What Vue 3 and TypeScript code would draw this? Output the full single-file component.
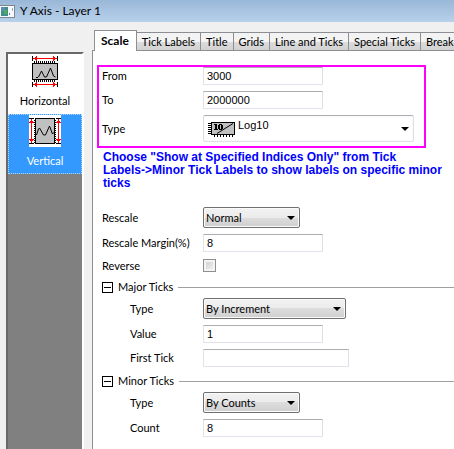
<script setup lang="ts">
import { ref } from 'vue'

interface AxisItem {
  id: string
  label: string
}

const axes: AxisItem[] = [
  { id: 'horizontal', label: 'Horizontal' },
  { id: 'vertical', label: 'Vertical' },
]
const tabs: string[] = ['Scale', 'Tick Labels', 'Title', 'Grids', 'Line and Ticks', 'Special Ticks', 'Break']

const activeAxis = ref('vertical')
const activeTab = ref('Scale')

const from = ref('3000')
const to = ref('2000000')
const scaleType = ref('Log10')
const rescale = ref('Normal')
const margin = ref('8')
const reverse = ref(false)
const majorOpen = ref(true)
const majorType = ref('By Increment')
const majorValue = ref('1')
const firstTick = ref('')
const minorOpen = ref(true)
const minorType = ref('By Counts')
const minorCount = ref('8')
</script>

<template>
  <div class="dialog">
    <header class="titlebar">
      <svg class="app-icon" width="16" height="13" viewBox="0 0 16 13" shape-rendering="crispEdges" aria-hidden="true">
        <rect x="0" y="0" width="15" height="13" fill="#7d8794" />
        <rect x="0" y="1" width="14" height="11" fill="#f6f9fb" />
        <rect x="1" y="2" width="7" height="9" fill="#3f8f86" />
        <rect x="1" y="2" width="4" height="4" fill="#5d8fb4" />
        <rect x="4" y="5" width="3" height="4" fill="#54a866" />
        <rect x="9" y="8" width="1" height="2" fill="#6a7f90" />
        <rect x="12" y="3" width="1" height="3" fill="#8db3c4" />
      </svg>
      <h1>Y Axis - Layer 1</h1>
    </header>

    <div class="body">
      <nav class="sidebar" aria-label="Axes">
        <button
          v-for="axis in axes"
          :key="axis.id"
          type="button"
          class="axis"
          :class="{ selected: activeAxis === axis.id }"
          @click="activeAxis = axis.id"
        >
          <svg v-if="axis.id === 'horizontal'" width="32" height="32" viewBox="0 0 32 32" shape-rendering="crispEdges" aria-hidden="true">
            <rect width="32" height="32" fill="#fff" />
            <path d="M3.500 1v5M28.500 1v5M3.500 27v5M28.500 27v5" stroke="#000" />
            <path d="M5 3.500h22M5 29.500h22" stroke="#f00" />
            <path d="M4 3.500l4-2.500v5zM28 3.500l-4-2.500v5zM4 29.500l4-2.500v5zM28 29.500l-4-2.500v5z" fill="#f00" />
            <path d="M5 7h22M5 26h22" stroke="#000" stroke-width="2" stroke-dasharray="1 1" />
            <rect x="3.500" y="8.500" width="25" height="16" fill="#c0c0c0" stroke="#000" />
            <path d="M7 22.500h2" stroke="#000" />
            <path d="M9.500 22l3-6 3 6h2l4-9 3 8 2 1" fill="none" stroke="#000" shape-rendering="auto" />
          </svg>
          <svg v-else width="32" height="32" viewBox="0 0 32 32" shape-rendering="crispEdges" aria-hidden="true">
            <rect width="32" height="32" fill="#fff" />
            <path d="M0 3.500h5M0 28.500h5M27 3.500h5M27 28.500h5" stroke="#000" />
            <path d="M2.500 5v22M29.500 5v22" stroke="#f00" />
            <path d="M2.500 4L0 8h5zM2.500 28L0 24h5zM29.500 4L27 8h5zM29.500 28L27 24h5z" fill="#f00" />
            <path d="M5.500 5v23M26.500 5v23" stroke="#000" stroke-width="1" stroke-dasharray="1 1" />
            <rect x="6.500" y="3.500" width="19" height="25" fill="#c0c0c0" stroke="#000" />
            <path d="M7.500 20l2-6 1-1 4 7h2l4-9 3 8 2-2" fill="none" stroke="#000" shape-rendering="auto" />
          </svg>
          <span>{{ axis.label }}</span>
        </button>
      </nav>

      <main class="notebook">
        <div class="tabs" role="tablist">
          <button
            v-for="tab in tabs"
            :key="tab"
            type="button"
            role="tab"
            class="tab"
            :class="{ active: activeTab === tab }"
            :aria-selected="activeTab === tab"
            @click="activeTab = tab"
          >{{ tab }}</button>
        </div>

        <form class="pane" @submit.prevent>
          <div class="range">
            <div class="row">
              <label for="from">From</label>
              <input id="from" v-model="from" type="text">
            </div>
            <div class="row">
              <label for="to">To</label>
              <input id="to" v-model="to" type="text">
            </div>
            <div class="row">
              <label for="scale-type">Type</label>
              <div class="picker flat">
                <svg class="scale-icon" width="27" height="18" viewBox="0 0 27 18" shape-rendering="crispEdges" aria-hidden="true">
                  <rect x="3.500" y="1.500" width="23" height="12" fill="#c0c0c0" stroke="#000" />
                  <path d="M1.500 2v12" stroke="#000" stroke-width="3" stroke-dasharray="1 1" />
                  <path d="M6 15h20" stroke="#000" stroke-width="2" stroke-dasharray="1 2" />
                  <path d="M6 3h3v5h1v1H6V8h1V4H6zM11 3h3v1h1v4h-1v1h-3V8h-1V4h1zM12 4v4h1V4z" fill="#000" fill-rule="evenodd" />
                  <path d="M9 12.500l16-10" fill="none" stroke="#000" shape-rendering="auto" />
                </svg>
                <select id="scale-type" v-model="scaleType">
                  <option>Log10</option>
                  <option>Linear</option>
                </select>
              </div>
            </div>
          </div>

          <p class="note">Choose "Show at Specified Indices Only" from Tick<br>Labels-&gt;Minor Tick Labels to show labels on specific minor ticks</p>

          <div class="fields">
            <div class="row">
              <label for="rescale">Rescale</label>
              <div class="picker">
                <select id="rescale" v-model="rescale">
                  <option>Normal</option>
                  <option>Auto</option>
                </select>
              </div>
            </div>
            <div class="row">
              <label for="margin">Rescale Margin(%)</label>
              <input id="margin" v-model="margin" type="text">
            </div>
            <div class="row check">
              <label for="reverse">Reverse</label>
              <input id="reverse" v-model="reverse" type="checkbox">
            </div>
          </div>

          <section>
            <h2>
              <button type="button" class="toggle" :aria-expanded="majorOpen" aria-label="Major Ticks" @click="majorOpen = !majorOpen"></button>
              Major Ticks
            </h2>
            <div v-show="majorOpen" class="fields nested">
              <div class="row">
                <label for="major-type">Type</label>
                <div class="picker wide">
                  <select id="major-type" v-model="majorType">
                    <option>By Increment</option>
                    <option>By Counts</option>
                  </select>
                </div>
              </div>
              <div class="row">
                <label for="major-value">Value</label>
                <input id="major-value" v-model="majorValue" type="text">
              </div>
              <div class="row">
                <label for="first-tick">First Tick</label>
                <input id="first-tick" v-model="firstTick" class="wide" type="text">
              </div>
            </div>
          </section>

          <section>
            <h2>
              <button type="button" class="toggle" :aria-expanded="minorOpen" aria-label="Minor Ticks" @click="minorOpen = !minorOpen"></button>
              Minor Ticks
            </h2>
            <div v-show="minorOpen" class="fields nested">
              <div class="row">
                <label for="minor-type">Type</label>
                <div class="picker">
                  <select id="minor-type" v-model="minorType">
                    <option>By Counts</option>
                    <option>By Increment</option>
                  </select>
                </div>
              </div>
              <div class="row">
                <label for="minor-count">Count</label>
                <input id="minor-count" v-model="minorCount" type="text">
              </div>
            </div>
          </section>
        </form>
      </main>
    </div>
  </div>
</template>

<style>
body {
  background: #f0f0f0;
}
</style>

<style scoped>
.dialog {
  display: flex;
  flex-direction: column;
  min-height: 100vh;
  overflow: hidden;
  background: #f0f0f0;
  color: #000;
  font: 11px/16px Lato, "Noto Sans", sans-serif;
}

.dialog *,
.dialog *::after {
  box-sizing: border-box;
}

.titlebar {
  display: flex;
  align-items: center;
  gap: 4px;
  height: 22px;
  background: linear-gradient(#99b7d8, #b9d1ea);
}

h1 {
  margin: 0;
  font-size: 12px;
  line-height: 16px;
  font-weight: 400;
}

.body {
  display: flex;
  flex: 1;
}

.sidebar {
  display: flex;
  flex: none;
  flex-direction: column;
  width: 78px;
  margin: 30px 8px 0 6px;
  border: 2px solid #fff;
  border-top-color: #696969;
  border-left-color: #696969;
  border-bottom: 0;
  background: #808080;
}

.axis {
  display: flex;
  flex-direction: column;
  align-items: center;
  gap: 6px;
  height: 60px;
  padding: 0;
  border: 1px solid #fff;
  background: #fff;
  color: #000;
  font: inherit;
}

.axis.selected {
  border: 1px dotted #b8d9ff;
  background: #39f;
  color: #fff;
}

.notebook {
  display: flex;
  flex: 1;
  flex-direction: column;
  min-width: 0;
  padding-top: 8px;
}

.tabs {
  display: flex;
  align-items: flex-end;
  height: 20px;
  padding-left: 2px;
}

.tab {
  flex: none;
  height: 18px;
  padding: 0 5px;
  border: 1px solid #8c8e94;
  border-left-width: 0;
  border-bottom: 0;
  background: linear-gradient(#f3f3f3 50%, #dcdcdc 50%, #d2d2d2);
  color: #000;
  font: inherit;
  line-height: 16px;
  white-space: nowrap;
}

.tab.active {
  height: 21px;
  margin-bottom: -1px;
  padding: 0 7px 0 6px;
  border-left-width: 1px;
  background: #fff;
  font-size: 12px;
  font-weight: 700;
  z-index: 1;
}

.pane {
  flex: 1;
  padding: 14px 0 11px 4px;
  border-top: 1px solid #8c8e94;
  border-left: 1px solid #8c8e94;
  background: #fff;
}

.range {
  display: flex;
  flex-direction: column;
  gap: 6px;
  width: 329px;
  padding: 0 3px 4px;
  border: 2px solid #f0f;
}

.row {
  display: flex;
  align-items: center;
}

.row label {
  flex: none;
  width: 101px;
}

.fields {
  display: flex;
  flex-direction: column;
  gap: 6px;
  padding-left: 5px;
}

.nested {
  padding-left: 33px;
}

.nested label {
  width: 73px;
}

input[type="text"] {
  width: 120px;
  height: 18px;
  padding: 0 3px;
  border: 1px solid #e2e3ea;
  border-top-color: #abadb3;
  border-right-color: #dbdfe6;
  border-radius: 1px;
  background: #fff;
  color: #000;
  font: 11px/16px "Liberation Sans", Arial, sans-serif;
}

input[type="text"].wide {
  width: 146px;
}

.picker {
  position: relative;
  width: 97px;
}

.picker.wide {
  width: 143px;
}

.picker.flat {
  width: 211px;
}

.picker::after {
  content: "";
  position: absolute;
  top: 9px;
  right: 5px;
  border: 4px solid transparent;
  border-top-color: #000;
  border-bottom: 0;
  pointer-events: none;
}

.picker.flat::after {
  top: 12px;
}

select {
  display: block;
  width: 100%;
  height: 21px;
  padding: 0 16px 0 2px;
  border: 1px solid #707070;
  border-radius: 2px;
  appearance: none;
  background: linear-gradient(#f2f2f2, #ebebeb 50%, #dddddd 50%, #cfcfcf);
  box-shadow: inset 0 0 0 1px #fafafa;
  color: #000;
  font: inherit;
}

.flat select {
  height: 27px;
  padding: 0 20px 8px 34px;
  border-color: #abadb3 #dbdfe6 #e2e3ea;
  background: #fff;
  font: 11px/16px "Liberation Sans", Arial, sans-serif;
}

.scale-icon {
  position: absolute;
  top: 6px;
  left: 5px;
}

.note {
  width: 346px;
  margin: 3px 0 17px;
  padding-left: 6px;
  color: #00f;
  font: 700 12px/13px "Liberation Sans", Arial, sans-serif;
}

.check {
  height: 15px;
}

input[type="checkbox"] {
  width: 13px;
  height: 13px;
  margin: 0;
  border: 1px solid #8e8f8f;
  appearance: none;
  background: linear-gradient(135deg, #c9ccd1, #f6f6f6);
  box-shadow: inset 0 0 0 2px #f4f4f4;
}

input[type="checkbox"]:checked {
  background: #2b4f8c;
}

h2 {
  display: flex;
  align-items: center;
  gap: 5px;
  height: 16px;
  margin: 6px 0 3px;
  padding-left: 5px;
  font-size: 11px;
  line-height: 16px;
  font-weight: 400;
}

h2::after {
  content: "";
  flex: 1;
  height: 1px;
  background: #a0a0a0;
}

.toggle {
  display: grid;
  place-items: center;
  width: 11px;
  height: 11px;
  padding: 0;
  border: 1px solid #000;
  background: #fff;
}

.toggle::before {
  content: "";
  width: 7px;
  height: 1px;
  background: #000;
}
</style>
